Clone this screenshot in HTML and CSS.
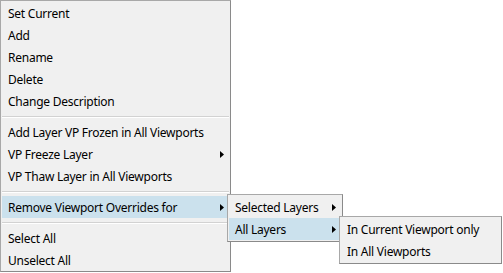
FILE: index.html
```html
<!DOCTYPE html>
<html>
<head>
<meta charset="utf-8">
<link rel="stylesheet" href="styles.css">
</head>
<body>
<div class="stage">
  <ul class="menu main">
    <li class="item">Set Current</li>
    <li class="item">Add</li>
    <li class="item">Rename</li>
    <li class="item">Delete</li>
    <li class="item">Change Description</li>
    <li class="sep"></li>
    <li class="item">Add Layer VP Frozen in All Viewports</li>
    <li class="item">VP Freeze Layer<svg class="arrow" width="4" height="7" viewBox="0 0 4 7"><path d="M0 0L4 3.5L0 7Z"/></svg></li>
    <li class="item">VP Thaw Layer in All Viewports</li>
    <li class="sep"></li>
    <li class="item hl">Remove Viewport Overrides for<svg class="arrow" width="4" height="7" viewBox="0 0 4 7"><path d="M0 0L4 3.5L0 7Z"/></svg></li>
    <li class="sep"></li>
    <li class="item">Select All</li>
    <li class="item">Unselect All</li>
  </ul>
  <ul class="menu sub1">
    <li class="item">Selected Layers<svg class="arrow" width="4" height="7" viewBox="0 0 4 7"><path d="M0 0L4 3.5L0 7Z"/></svg></li>
    <li class="item hl">All Layers<svg class="arrow" width="4" height="7" viewBox="0 0 4 7"><path d="M0 0L4 3.5L0 7Z"/></svg></li>
  </ul>
  <ul class="menu sub2">
    <li class="item">In Current Viewport only</li>
    <li class="item">In All Viewports</li>
  </ul>
</div>
</body>
</html>
```
FILE: styles.css
```css
html, body {
  margin: 0;
  padding: 0;
  background: #ffffff;
}
body {
  font-family: "Noto Sans", "Open Sans", sans-serif;
  font-size: 12px;
  letter-spacing: -0.25px;
  color: #000;
}
.stage {
  position: relative;
  width: 503px;
  height: 273px;
  overflow: hidden;
}
.menu {
  list-style: none;
  margin: 0;
  background: #f0f0f0;
  border: 1px solid;
  border-color: #a8a8a8 #8a8a8a #8a8a8a #a8a8a8;
  box-sizing: border-box;
}
.main {
  width: 231px;
  padding: 1px 1px 0 1px;
}
.sub1 {
  position: absolute;
  left: 227px;
  top: 194px;
  width: 116px;
  padding: 1px;
}
.sub2 {
  position: absolute;
  left: 339px;
  top: 216px;
  width: 163px;
  padding: 1px;
}
.item {
  display: flex;
  align-items: center;
  justify-content: space-between;
  box-sizing: border-box;
  height: 22px;
  padding: 1px 5px 0 6px;
  white-space: nowrap;
  line-height: 20px;
}
.hl {
  background: #cbe1ed;
}
.arrow {
  fill: #000;
  display: block;
}
.sep {
  height: 9px;
  box-sizing: border-box;
  padding-top: 4px;
}
.sep::after {
  content: "";
  display: block;
  height: 1px;
  background: #d2d2d2;
  border-bottom: 1px solid #ffffff;
}
```
